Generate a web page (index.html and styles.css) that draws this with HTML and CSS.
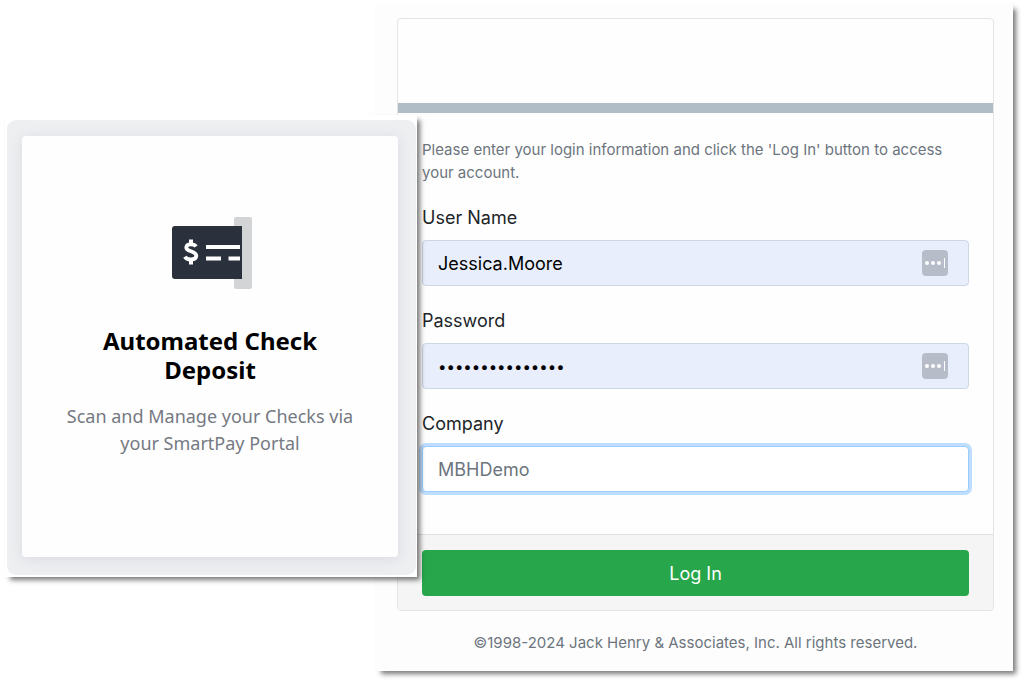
FILE: index.html
```html
<!DOCTYPE html>
<html lang="en">
    <head>
        <meta charset="UTF-8" />
        <meta name="viewport" content="width=device-width, initial-scale=1.0" />
        <title>Log In</title>
        <link rel="stylesheet" href="styles.css">
    </head>
    <body>
        <section class="tile">
            <div class="tile-frame">
                <div class="tile-card">
                    <svg class="check-icon" viewBox="0 0 80 72" width="80" height="72">
                        <rect x="62" y="0" width="18" height="72" rx="2" fill="#d3d4d5" />
                        <path d="M3 9H70V62H3a3 3 0 0 1-3-3V12a3 3 0 0 1 3-3z" fill="#2b313c" />
                        <g stroke="#fff" fill="none">
                            <path d="M24 29.500C22.500 27 15 26 14.300 30.200C13.700 35 24.500 33.500 24.300 39C24 43.500 15 43.500 12.800 39.800" stroke-width="3.800" />
                            <path d="M19 22.500V28M19 42V47.500" stroke-width="4" />
                            <path d="M34 30H68M34 41.500H49M56.500 41.500H68" stroke-width="4" />
                        </g>
                    </svg>
                    <h2>Automated Check Deposit</h2>
                    <p>Scan and Manage your Checks via your SmartPay Portal</p>
                </div>
            </div>
        </section>
        <main class="panel">
            <form class="login">
                <div class="login-header"></div>
                <div class="login-body">
                    <p class="intro">Please enter your login information and click the 'Log In' button to access your account.</p>
                    <label for="username">User Name</label>
                    <div class="field">
                        <input type="text" id="username" class="filled" value="Jessica.Moore" />
                        <svg class="key-icon" viewBox="0 0 26 26" width="26" height="26">
                            <rect width="26" height="26" rx="4" fill="#b6bdc8" />
                            <g fill="#fff">
                                <circle cx="5" cy="13" r="2" />
                                <circle cx="11" cy="13" r="2" />
                                <circle cx="17" cy="13" r="2" />
                                <rect x="22" y="8" width="1" height="10" />
                            </g>
                        </svg>
                    </div>
                    <label for="password">Password</label>
                    <div class="field">
                        <input type="password" id="password" class="filled" value="smartpaydemo123" />
                        <svg class="key-icon" viewBox="0 0 26 26" width="26" height="26">
                            <rect width="26" height="26" rx="4" fill="#b6bdc8" />
                            <g fill="#fff">
                                <circle cx="5" cy="13" r="2" />
                                <circle cx="11" cy="13" r="2" />
                                <circle cx="17" cy="13" r="2" />
                                <rect x="22" y="8" width="1" height="10" />
                            </g>
                        </svg>
                    </div>
                    <label for="company">Company</label>
                    <div class="field">
                        <input type="text" id="company" class="active" placeholder="MBHDemo" />
                    </div>
                </div>
                <div class="login-footer">
                    <button type="submit">Log In</button>
                </div>
            </form>
            <p class="copyright">©1998-2024 Jack Henry &amp; Associates, Inc. All rights reserved.</p>
        </main>
    </body>
</html>
```

FILE: styles.css
```css
* {
    box-sizing: border-box;
}
body {
    margin: 0;
    padding: 4px 13px 12px 5px;
    display: flex;
    align-items: flex-start;
    background: #fff;
    font-family: Inter, "Liberation Sans", sans-serif;
}
h2,
p {
    margin: 0;
}
/* the tile overlaps the left edge of the login panel */
.tile {
    position: relative;
    z-index: 1;
    flex: 0 0 412px;
    margin: 111px -41px 0 0;
    padding: 5px 1px 2px 2px;
    background: #fff;
    box-shadow: 4px 4px 5px -1px #0008;
    font-family: "Noto Sans", "Open Sans", sans-serif;
    text-align: center;
}
.tile-frame {
    padding: 16px 18px 18px 15px;
    border-radius: 9px;
    background: #eeeff1;
}
.tile-card {
    min-height: 421px;
    padding: 81px 40px 40px;
    border-radius: 4px;
    background: #fefefe;
    box-shadow: 0 2px 14px #d8dae0;
}
.check-icon {
    display: block;
    margin: 0 auto;
    padding-left: 4px;
    box-sizing: content-box;
}
.tile h2 {
    margin-top: 37px;
    color: #000;
    font-size: 24px;
    line-height: 29px;
}
.tile p {
    margin-top: 19px;
    color: #757982;
    font-size: 18px;
    line-height: 27px;
}
.panel {
    flex: 1;
    min-width: 0;
    padding: 14px 19px 17px 21px;
    background: #fdfdfd;
    box-shadow: 4px 4px 5px -1px #0008;
}
.login {
    border: 1px solid #e3e4e5;
    border-radius: 4px;
    background: #fefefe;
}
.login-header {
    height: 94px;
    border-bottom: 10px solid #b0bcc6;
}
.login-body {
    padding: 25px 24px 21px;
}
.intro {
    margin-bottom: 20px;
    color: #6c757d;
    font-size: 15px;
    line-height: 23px;
}
label {
    display: block;
    margin-bottom: 8px;
    color: #212529;
    font-size: 18px;
    line-height: 28px;
}
.field {
    position: relative;
    margin-bottom: 21px;
}
input {
    display: block;
    width: 100%;
    height: 46px;
    padding: 0 48px 0 15px;
    border: 1px solid #ced4da;
    border-radius: 4px;
    background: #fff;
    color: #000;
    font-family: inherit;
    font-size: 18px;
    outline: none;
}
input::placeholder {
    color: #6c757d;
    opacity: 1;
}
input[type="password"] {
    font-size: 15px;
}
.filled {
    border-color: #cdd6e4;
    background: #e8eefc;
}
.active,
input:focus {
    border-color: #99ccff;
    box-shadow: 0 0 0 3px #bfdeff;
}
.key-icon {
    position: absolute;
    top: 10px;
    right: 21px;
}
.login-footer {
    padding: 15px 24px 14px;
    border-top: 1px solid #dfdfdf;
    border-radius: 0 0 4px 4px;
    background: #f5f5f5;
}
button {
    display: block;
    width: 100%;
    height: 46px;
    border: 0;
    border-radius: 4px;
    background: #27a64c;
    color: #fff;
    font-family: inherit;
    font-size: 18px;
    cursor: pointer;
}
.copyright {
    margin-top: 20px;
    color: #6c757d;
    font-size: 15px;
    line-height: 23px;
    text-align: center;
}
```
